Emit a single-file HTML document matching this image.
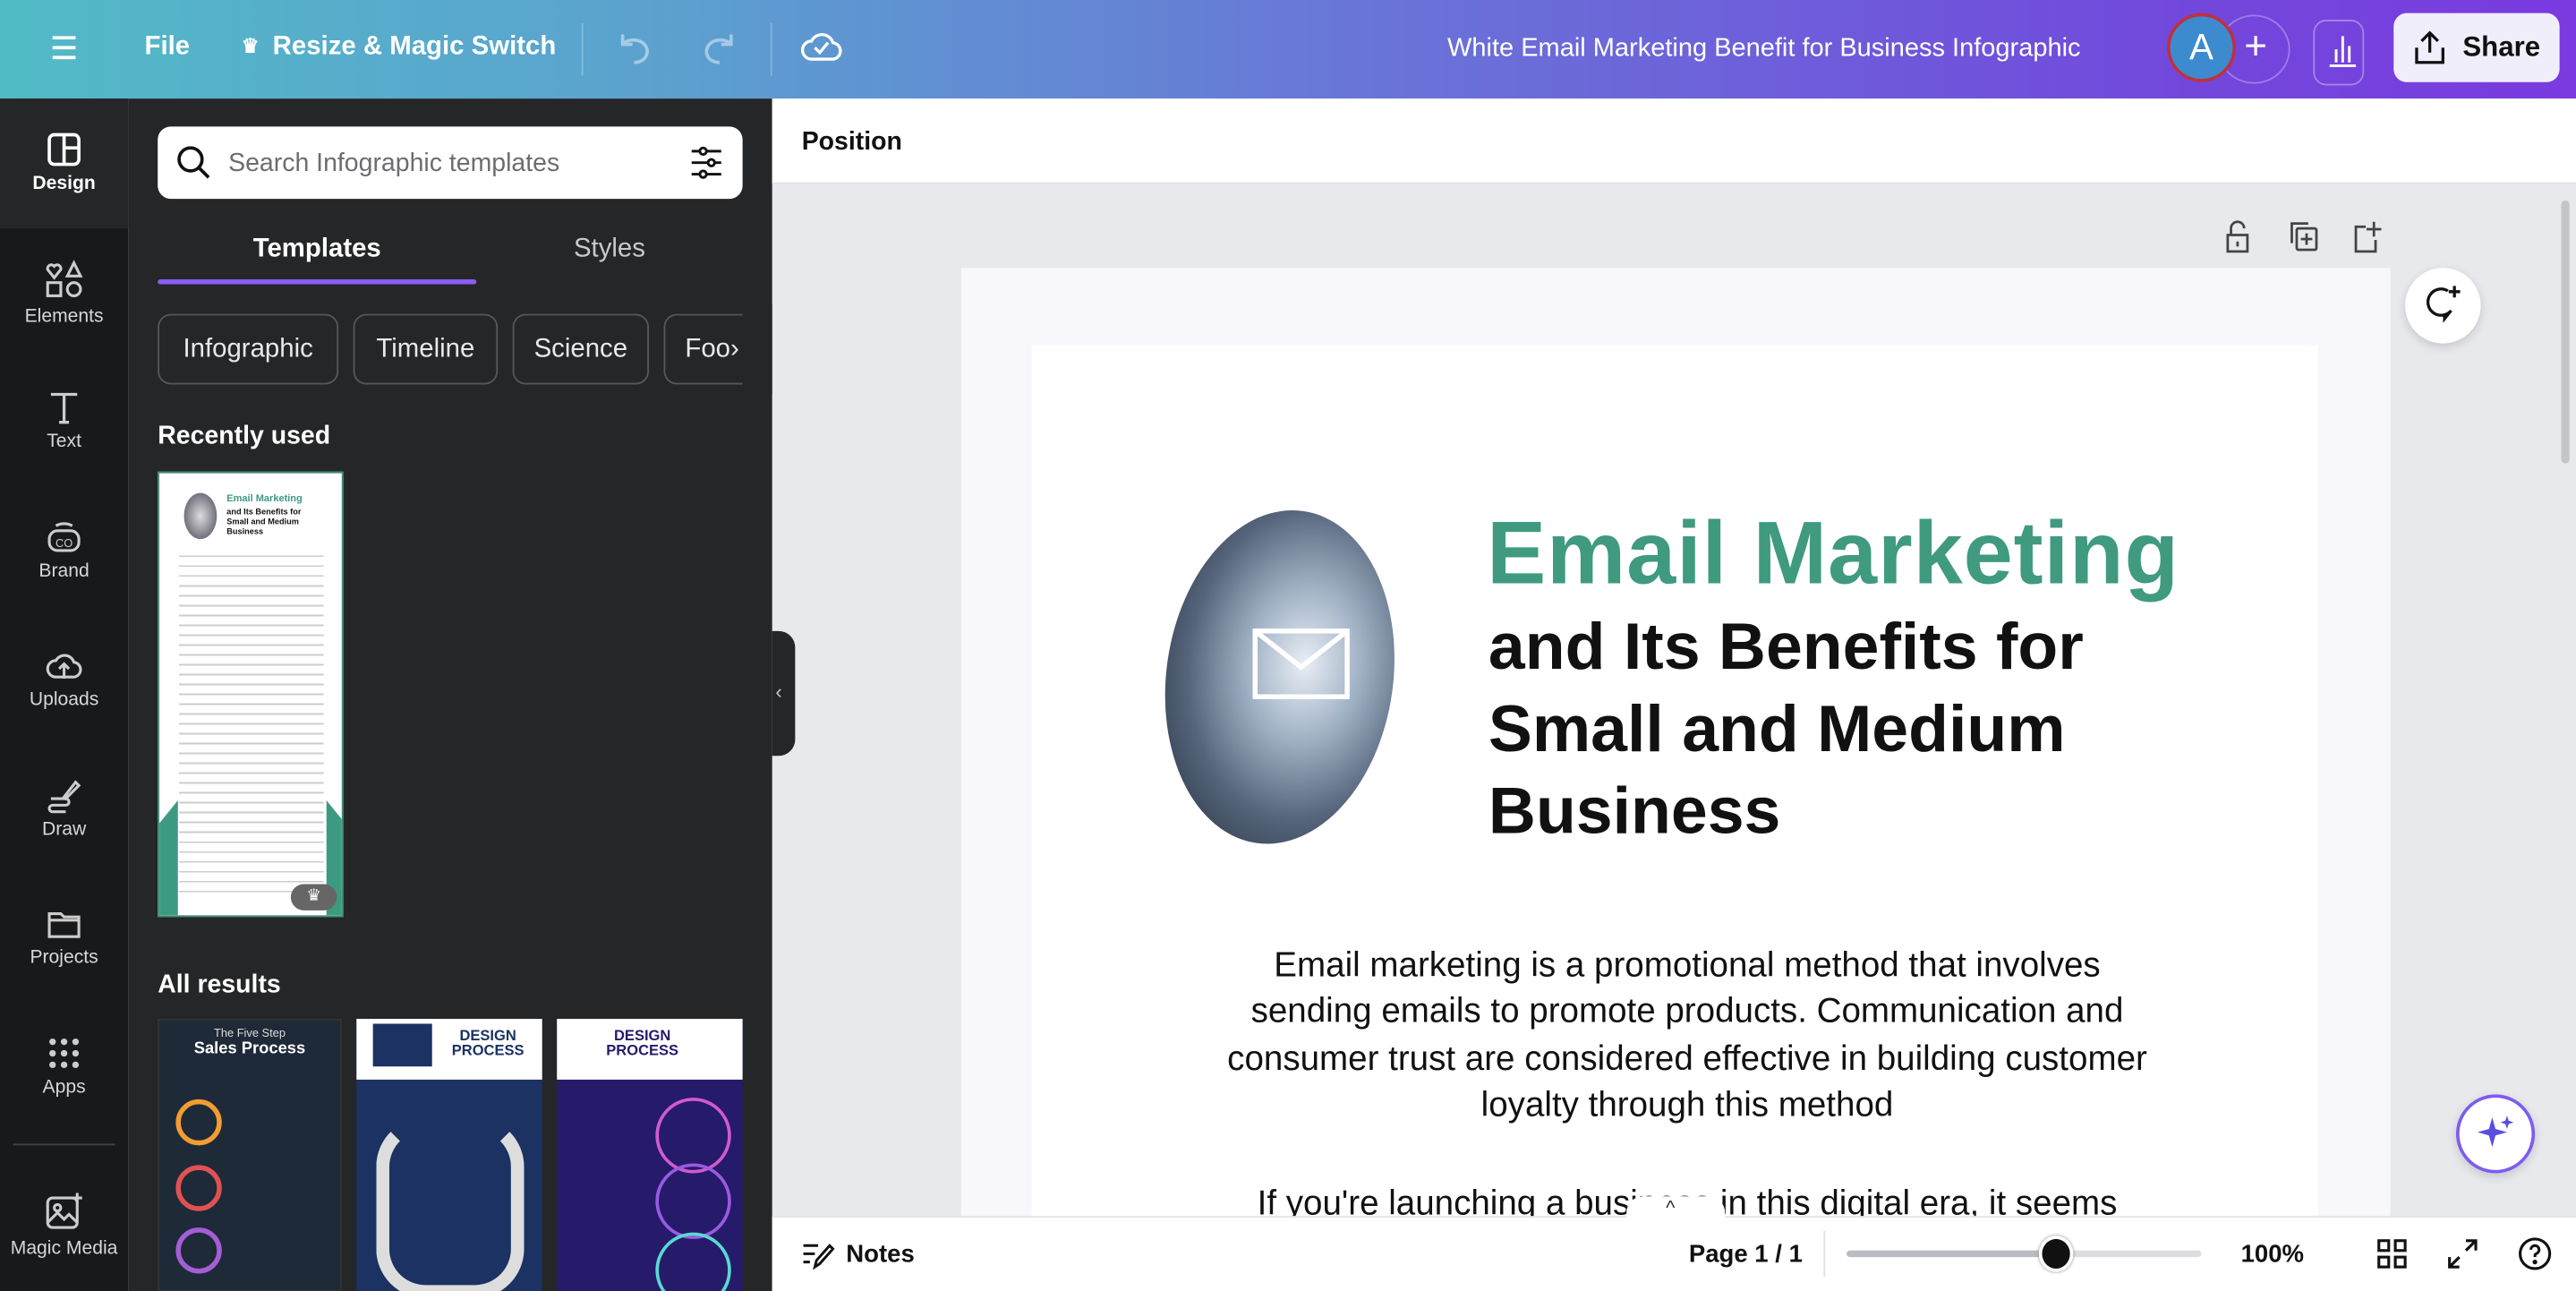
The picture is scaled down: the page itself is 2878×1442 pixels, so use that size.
<!DOCTYPE html>
<html><head><meta charset="utf-8">
<style>
*{box-sizing:border-box;margin:0;padding:0}
html,body{width:2878px;height:1442px;overflow:hidden;background:#e8e9ec}
#s{width:1568px;height:786px;transform:scale(1.835459);transform-origin:0 0;position:relative;font-family:"Liberation Sans",sans-serif;overflow:hidden}
.abs{position:absolute}
.top{left:0;top:0;width:1568px;height:60px;background:linear-gradient(90deg,#52bac6 0%,#5ba2cf 25%,#6a72d8 55%,#7248dc 85%,#7a3ae0 100%);color:#fff}
.top span{position:absolute;font-size:16px;font-weight:bold}
.rail{left:0;top:60px;width:78px;height:726px;background:#18191b}
.panel{left:78px;top:60px;width:392px;height:726px;background:#252627}
.ri{position:absolute;left:0;width:78px;text-align:center;color:#d7d7d9;font-size:11.5px}
.ri svg{display:block;margin:0 auto 4px}
.chip{position:absolute;top:191px;height:43px;border:1px solid #55575a;border-radius:8px;color:#e9e9ea;font-size:16px;line-height:41px;text-align:center}
</style></head><body><div id="s">
<div class="abs top">
 <svg class="abs" style="left:30px;top:20px" width="18" height="18" viewBox="0 0 18 18" stroke="#fff" stroke-width="2"><path d="M2 3h14M2 9h14M2 15h14"/></svg>
 <span style="left:88px;top:20px">File</span>
 <span style="left:147px;top:21px;font-size:12px">♛</span>
 <span style="left:166px;top:20px">Resize &amp; Magic Switch</span>
 <div class="abs" style="left:354px;top:14px;width:1px;height:32px;background:rgba(255,255,255,.25)"></div>
 <svg class="abs" style="left:374px;top:17px" width="26" height="24" viewBox="0 0 26 24" fill="none" stroke="rgba(255,255,255,.45)" stroke-width="2"><path d="M5 4v6h6M5 10c3-4 14-4 15 4 0 4-3 7-8 7"/></svg>
 <svg class="abs" style="left:424px;top:17px" width="26" height="24" viewBox="0 0 26 24" fill="none" stroke="rgba(255,255,255,.45)" stroke-width="2"><path d="M21 4v6h-6M21 10c-3-4-14-4-15 4 0 4 3 7 8 7"/></svg>
 <div class="abs" style="left:469px;top:14px;width:1px;height:32px;background:rgba(255,255,255,.25)"></div>
 <svg class="abs" style="left:487px;top:16px" width="26" height="24" viewBox="0 0 26 24" fill="none" stroke="#fff" stroke-width="1.8"><path d="M7 20h12a5 5 0 0 0 1-10 7 7 0 0 0-13-1 5.5 5.5 0 0 0 0 11z"/><path d="M9 13l3 3 5-6"/></svg>
 <span style="left:881px;top:21px;font-weight:normal;font-size:15.8px">White Email Marketing Benefit for Business Infographic</span>
 <div class="abs" style="left:1350px;top:9px;width:44px;height:42px;border-radius:50%;border:1px solid rgba(255,255,255,.3);text-align:center;line-height:38px;font-size:24px;padding-left:2px">+</div>
 <div class="abs" style="left:1319px;top:8px;width:42px;height:42px;border-radius:50%;background:#3c8bcf;border:2px solid #c0303f;text-align:center;line-height:38px;font-size:22px">A</div>
 <div class="abs" style="left:1408px;top:12px;width:31px;height:40px;border-radius:8px;border:1px solid rgba(255,255,255,.35)"></div>
 <svg class="abs" style="left:1415px;top:18px" width="22" height="24" viewBox="0 0 22 24" stroke="#fff" stroke-width="1.6"><path d="M3 22h16M7 20V12M11 20V4M15 20V10"/></svg>
 <div class="abs" style="left:1457px;top:8px;width:101px;height:42px;border-radius:8px;background:#f1eefb;color:#111"><svg class="abs" style="left:10px;top:9px" width="24" height="24" viewBox="0 0 24 24" fill="none" stroke="#111" stroke-width="1.8"><path d="M12 15V3M7 8l5-5 5 5M4 12v9h16v-9"/></svg><span style="left:42px;top:11px;color:#111;font-size:17px">Share</span></div>
</div>
<div class="abs rail"></div>
<div class="abs" style="left:0;top:60px;width:78px;height:79px;background:#252627"></div>
<div class="abs panel"></div>
<div class="ri" style="top:80px;color:#fff;font-weight:bold"><svg width="22" height="22" viewBox="0 0 22 22" fill="none" stroke="#fff" stroke-width="2"><rect x="2" y="2" width="18" height="18" rx="3"/><path d="M11 2v18M11 10h9"/></svg>Design</div>
<div class="ri" style="top:157px"><svg width="26" height="26" viewBox="0 0 26 26" fill="none" stroke="#ccc" stroke-width="1.7"><path d="M7 12l-4-5a2.3 2.3 0 0 1 4-2 2.3 2.3 0 0 1 4 2z"/><path d="M19 3l4 8h-8z"/><rect x="3" y="15" width="8" height="8"/><circle cx="19" cy="19" r="4"/></svg>Elements</div>
<div class="ri" style="top:237px"><svg width="22" height="22" viewBox="0 0 22 22" fill="none" stroke="#ccc" stroke-width="1.8"><path d="M3 3h16M11 3v17M8 20h6"/></svg>Text</div>
<div class="ri" style="top:316px"><svg width="24" height="22" viewBox="0 0 24 22" fill="none" stroke="#ccc" stroke-width="1.7"><rect x="3" y="7" width="18" height="12" rx="5"/><path d="M7 4a8 6 0 0 1 10 0"/><text x="12" y="17" font-size="7" text-anchor="middle" fill="#ccc" stroke="none" font-family="Liberation Sans">CO</text></svg>Brand</div>
<div class="ri" style="top:394px"><svg width="24" height="22" viewBox="0 0 24 22" fill="none" stroke="#ccc" stroke-width="1.7"><path d="M7 18h10a4.5 4.5 0 0 0 1-9 6 6 0 0 0-11-1 5 5 0 0 0 0 10zM12 19v-8M9 13l3-3 3 3"/></svg>Uploads</div>
<div class="ri" style="top:473px"><svg width="24" height="22" viewBox="0 0 24 22" fill="none" stroke="#ccc" stroke-width="1.7"><path d="M12 12l7-9 2 2-8 8zM4 13h9a2 2 0 0 1 0 4H5a2 2 0 0 0 0 4h8"/></svg>Draw</div>
<div class="ri" style="top:551px"><svg width="24" height="22" viewBox="0 0 24 22" fill="none" stroke="#ccc" stroke-width="1.7"><path d="M3 5h7l2 2h9v12H3zM3 9h18"/></svg>Projects</div>
<div class="ri" style="top:630px"><svg width="22" height="22" viewBox="0 0 22 22" fill="#ccc"><circle cx="4" cy="4" r="2"/><circle cx="11" cy="4" r="2"/><circle cx="18" cy="4" r="2"/><circle cx="4" cy="11" r="2"/><circle cx="11" cy="11" r="2"/><circle cx="18" cy="11" r="2"/><circle cx="4" cy="18" r="2"/><circle cx="11" cy="18" r="2"/><circle cx="18" cy="18" r="2"/></svg>Apps</div>
<div class="abs" style="left:8px;top:696px;width:62px;height:1px;background:#444"></div>
<div class="ri" style="top:724px"><svg width="26" height="26" viewBox="0 0 26 26" fill="none" stroke="#ccc" stroke-width="1.7"><rect x="3" y="5" width="18" height="18" rx="3"/><circle cx="9" cy="11" r="2"/><path d="M3 20l6-6 4 4 3-3 5 5M21 2v6M18 5h6"/></svg>Magic Media</div>
<div class="abs" style="left:96px;top:77px;width:356px;height:44px;background:#fff;border-radius:8px"></div>
<svg class="abs" style="left:106px;top:87px" width="24" height="24" viewBox="0 0 24 24" fill="none" stroke="#111" stroke-width="2"><circle cx="10" cy="10" r="7"/><path d="M15 15l6 6"/></svg>
<div class="abs" style="left:139px;top:91px;color:#6c6d70;font-size:15.5px">Search Infographic templates</div>
<svg class="abs" style="left:418px;top:87px" width="24" height="24" viewBox="0 0 24 24" fill="none" stroke="#111" stroke-width="1.6"><path d="M3 5h18M3 12h18M3 19h18"/><circle cx="10" cy="5" r="2" fill="#fff"/><circle cx="15" cy="12" r="2" fill="#fff"/><circle cx="10" cy="19" r="2" fill="#fff"/></svg>
<div class="abs" style="left:96px;top:143px;width:194px;text-align:center;color:#fff;font-size:16px;font-weight:bold">Templates</div>
<div class="abs" style="left:290px;top:143px;width:162px;text-align:center;color:#c9c9cb;font-size:16px">Styles</div>
<div class="abs" style="left:96px;top:170px;width:194px;height:3px;background:#8b5cf6;border-radius:2px"></div>
<div class="chip" style="left:96px;width:110px">Infographic</div>
<div class="chip" style="left:215px;width:88px">Timeline</div>
<div class="chip" style="left:312px;width:83px">Science</div>
<div class="chip" style="left:404px;width:60px;text-align:left;padding-left:12px;border-right:none;border-radius:8px 0 0 8px">Foo›</div>
<div class="abs" style="left:452px;top:185px;width:18px;height:55px;background:#252627"></div>
<div class="abs" style="left:96px;top:257px;color:#fff;font-size:15.5px;font-weight:bold">Recently used</div>
<div class="abs" style="left:96px;top:287px;width:113px;height:271px;background:#fff;border:1px solid #3b8d74;overflow:hidden">
 <div class="abs" style="left:0;bottom:0;width:113px;height:70px;background:#3d9a82;clip-path:polygon(0 20%,10% 0,10% 100%,90% 100%,90% 0,100% 20%,100% 100%,0 100%)"></div>
 <div class="abs" style="left:15px;top:12px;width:20px;height:28px;border-radius:50%;background:radial-gradient(#ddd,#445)"></div>
 <div class="abs" style="left:41px;top:13px;font-size:6px;color:#3d9a82;font-weight:bold">Email Marketing</div>
 <div class="abs" style="left:41px;top:21px;font-size:5px;color:#111;font-weight:bold;line-height:6px">and Its Benefits for<br>Small and Medium<br>Business</div>
 <div class="abs" style="left:12px;top:47px;width:88px;height:210px;background:repeating-linear-gradient(#fff 0 3px,#ccc 3px 4px,#fff 4px 6px)"></div>
 <div class="abs" style="left:80px;top:250px;width:28px;height:16px;border-radius:8px;background:#666;color:#fff;font-size:10px;text-align:center;line-height:16px">♛</div>
</div>
<div class="abs" style="left:96px;top:591px;color:#fff;font-size:15.5px;font-weight:bold">All results</div>
<div class="abs" style="left:96px;top:620px;width:112px;height:166px;background:#1e2a38;border:1px solid #333">
 <div style="text-align:center;color:#ddd;font-size:7px;margin-top:5px">The Five Step</div><div style="text-align:center;color:#fff;font-size:10px;font-weight:bold">Sales Process</div>
 <div class="abs" style="left:10px;top:48px;width:28px;height:28px;border-radius:50%;border:3px solid #f39c33"></div>
 <div class="abs" style="left:10px;top:88px;width:28px;height:28px;border-radius:50%;border:3px solid #e05252"></div>
 <div class="abs" style="left:10px;top:126px;width:28px;height:28px;border-radius:50%;border:3px solid #a45ed6"></div>
</div>
<div class="abs" style="left:217px;top:620px;width:113px;height:166px;background:#1b3263">
 <div style="height:37px;background:#fff"></div>
 <div class="abs" style="left:10px;top:3px;width:36px;height:26px;background:#1b3263"></div>
 <div class="abs" style="left:58px;top:6px;font-size:9px;color:#1b3263;font-weight:bold;line-height:9px;text-align:center">DESIGN<br>PROCESS</div>
 <div class="abs" style="left:12px;top:60px;width:90px;height:110px;border:8px solid #ddd;border-radius:30px;border-top-color:transparent"></div>
</div>
<div class="abs" style="left:339px;top:620px;width:113px;height:166px;background:#261a6b">
 <div style="height:37px;background:#fff"></div>
 <div class="abs" style="left:30px;top:6px;font-size:9px;color:#261a6b;font-weight:bold;line-height:9px;text-align:center">DESIGN<br>PROCESS</div>
 <div class="abs" style="left:60px;top:48px;width:46px;height:46px;border-radius:50%;border:2px solid #d05ad0"></div>
 <div class="abs" style="left:60px;top:88px;width:46px;height:46px;border-radius:50%;border:2px solid #9a5ae0"></div>
 <div class="abs" style="left:60px;top:130px;width:46px;height:46px;border-radius:50%;border:2px solid #5ad8d0"></div>
</div>
<div class="abs" style="left:470px;top:384px;width:14px;height:76px;background:#252627;border-radius:0 10px 10px 0"></div>
<div class="abs" style="left:472px;top:414px;color:#ccc;font-size:12px">‹</div>
<div class="abs" style="left:470px;top:60px;width:1098px;height:52px;background:#fff;border-bottom:1px solid #e2e2e5"></div>
<div class="abs" style="left:488px;top:78px;font-size:15.5px;font-weight:bold;color:#111">Position</div>
<svg class="abs" style="left:1352px;top:133px" width="20" height="22" viewBox="0 0 20 22" fill="none" stroke="#444" stroke-width="1.5"><path d="M4 10h12v10H4zM6 10V6a4 4 0 0 1 8 0"/><path d="M10 14v3"/></svg>
<svg class="abs" style="left:1391px;top:133px" width="22" height="22" viewBox="0 0 22 22" fill="none" stroke="#444" stroke-width="1.5"><path d="M4 15V3h10"/><rect x="7" y="6" width="12" height="13" rx="1"/><path d="M13 9v7M9.5 12.5h7"/></svg>
<svg class="abs" style="left:1430px;top:133px" width="22" height="22" viewBox="0 0 22 22" fill="none" stroke="#444" stroke-width="1.5"><path d="M10 5H4v15h12v-7M15 2v9M10.5 6.5h9"/></svg>
<div class="abs" style="left:585px;top:163px;width:870px;height:590px;background:#f7f7fc"></div>
<div class="abs" style="left:628px;top:210px;width:783px;height:560px;background:#fff"></div>
<div class="abs" style="left:1464px;top:163px;width:46px;height:46px;border-radius:50%;background:#fff;box-shadow:0 2px 6px rgba(0,0,0,.15)"></div>
<svg class="abs" style="left:1474px;top:172px" width="26" height="26" viewBox="0 0 26 26" fill="none" stroke="#111" stroke-width="1.8"><path d="M16 5a8 8 0 1 0 2 12l-4 5v-3"/><path d="M20 2v7M16.5 5.5h7"/></svg>
<div class="abs" style="left:1559px;top:122px;width:5px;height:160px;border-radius:3px;background:#c4c5c9"></div>
<div class="abs" style="left:710px;top:310px;width:138px;height:204px;border-radius:50%;background:radial-gradient(ellipse at 60% 45%,#e8eef5 0%,#9fb0c4 30%,#56657c 60%,#3a4658 80%,#dfe3e8 100%);transform:rotate(8deg);overflow:hidden"></div>
<svg class="abs" style="left:760px;top:380px" width="66" height="50" viewBox="0 0 66 50" fill="none" stroke="#fff" stroke-width="3"><rect x="4" y="4" width="56" height="40"/><path d="M4 4l28 22 28-22"/></svg>
<div class="abs" style="left:905px;top:306px;font-size:54px;font-weight:bold;color:#3f9a80;letter-spacing:.5px">Email Marketing</div>
<div class="abs" style="left:906px;top:369px;font-size:40px;font-weight:bold;color:#111;line-height:50px">and Its Benefits for<br>Small and Medium<br>Business</div>
<div class="abs" style="left:627px;top:574px;width:800px;text-align:center;font-size:21px;line-height:28.3px;color:#111;white-space:nowrap">Email marketing is a promotional method that involves<br>sending emails to promote products. Communication and<br>consumer trust are considered effective in building customer<br>loyalty through this method</div>
<div class="abs" style="left:627px;top:721px;width:800px;text-align:center;font-size:21px;color:#111">If you're launching a business in this digital era, it seems</div>
<div class="abs" style="left:470px;top:740px;width:1098px;height:46px;background:#fff;border-top:1px solid #e2e2e5"></div>
<div class="abs" style="left:990px;top:728px;width:60px;height:14px;background:#fff;border-radius:10px 10px 0 0"></div>
<div class="abs" style="left:1014px;top:728px;font-size:12px;color:#333">^</div>
<svg class="abs" style="left:487px;top:754px" width="22" height="20" viewBox="0 0 22 20" fill="none" stroke="#111" stroke-width="1.6"><path d="M2 4h9M2 9h7M2 14h4M9 17l1-4 8-9 2 2-8 9z"/></svg>
<div class="abs" style="left:515px;top:755px;font-size:15px;font-weight:bold;color:#111">Notes</div>
<div class="abs" style="left:1028px;top:755px;font-size:15px;font-weight:bold;color:#111">Page 1 / 1</div>
<div class="abs" style="left:1110px;top:749px;width:1px;height:28px;background:#e0e0e0"></div>
<div class="abs" style="left:1124px;top:761px;width:216px;height:4px;background:#dcdde0;border-radius:2px"></div>
<div class="abs" style="left:1124px;top:761px;width:128px;height:4px;background:#b9bcc2;border-radius:2px"></div>
<div class="abs" style="left:1241px;top:752px;width:21px;height:22px;border-radius:50%;background:#111;border:2px solid #fff;box-shadow:0 0 2px #888"></div>
<div class="abs" style="left:1364px;top:755px;font-size:15px;font-weight:bold;color:#111">100%</div>
<svg class="abs" style="left:1446px;top:753px" width="20" height="20" viewBox="0 0 20 20" fill="none" stroke="#111" stroke-width="1.7"><rect x="2" y="2" width="6" height="6"/><rect x="12" y="2" width="6" height="6"/><rect x="2" y="12" width="6" height="6"/><rect x="12" y="12" width="6" height="6"/></svg>
<svg class="abs" style="left:1489px;top:753px" width="20" height="20" viewBox="0 0 20 20" fill="none" stroke="#111" stroke-width="1.7"><path d="M12 2h6v6M18 2l-6 6M8 18H2v-6M2 18l6-6"/></svg>
<svg class="abs" style="left:1532px;top:752px" width="22" height="22" viewBox="0 0 22 22" fill="none" stroke="#111" stroke-width="1.7"><circle cx="11" cy="11" r="9"/><path d="M8.5 8.5a2.5 2.5 0 1 1 3.5 2.3c-1 .5-1 1-1 2.2"/><circle cx="11" cy="16" r=".6" fill="#111"/></svg>
<div class="abs" style="left:1495px;top:666px;width:48px;height:48px;border-radius:50%;background:#fff;border:2px solid #7d5cf0;box-shadow:0 2px 6px rgba(0,0,0,.15)"></div>
<svg class="abs" style="left:1505px;top:676px" width="28" height="28" viewBox="0 0 28 28" fill="#5a4ee0"><path d="M12 4l2 7 7 2-7 2-2 7-2-7-7-2 7-2z"/><path d="M21 3l1 3 3 1-3 1-1 3-1-3-3-1 3-1z"/></svg>
</div></body></html>
